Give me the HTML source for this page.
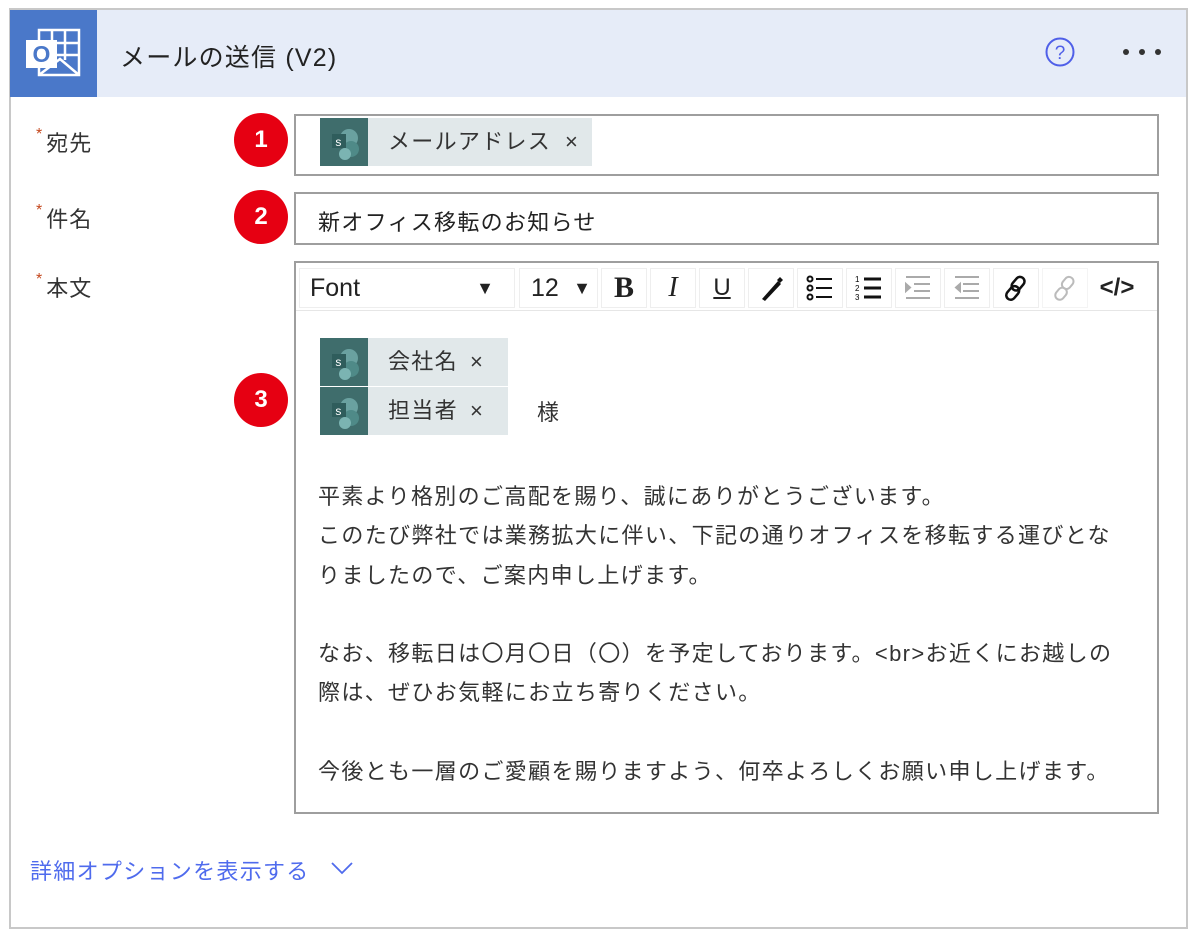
<!DOCTYPE html>
<html><head><meta charset="utf-8"><style>
*{box-sizing:border-box;margin:0;padding:0}
body{width:1200px;height:936px;background:#fff;position:relative;font-family:"Liberation Sans","Noto Sans CJK JP",sans-serif;color:#222;overflow:hidden}
.card{position:absolute;left:9px;top:8px;width:1179px;height:921px;border:2px solid #c8c8c8}
.hdr{position:absolute;left:10px;top:10px;width:1176px;height:87px;background:#e6ecf8}
.logo{position:absolute;left:10px;top:10px;width:87px;height:87px;background:#4a78c9}
.abs{position:absolute}
.j{font-size:22px;letter-spacing:1.3px}
.lbl{position:absolute;left:36px;font-size:22px;letter-spacing:1px;color:#333}
.lbl b{color:#c4471d;font-weight:normal;font-size:16px;vertical-align:top;margin-right:3px}
.box{position:absolute;left:294px;width:865px;border:2px solid #9e9e9e;background:#fff}
.badge{position:absolute;width:54px;height:54px;border-radius:50%;background:#e60012;color:#fff;font-weight:bold;font-size:24px;text-align:center;line-height:54px}
.tok{position:absolute;height:48px;background:#e1e8ea;font-size:22px;letter-spacing:1.3px;line-height:48px;color:#333}
.tok .ic{position:absolute;left:0;top:0;width:48px;height:48px;background:#3f6d6c}
.tb{position:absolute;top:268px;height:40px;border:1px solid #eee;background:#fff;font-size:24px;text-align:center;line-height:38px}
.body{position:absolute;left:318px;font-size:22px;letter-spacing:1.35px;line-height:39.3px;color:#333}
</style></head><body>
<div class="card"></div>
<div class="hdr"></div>
<div class="logo"><svg width="87" height="87" viewBox="0 0 87 87"><g fill="none" stroke="#fff" stroke-width="2.5"><rect x="29" y="20" width="40" height="45"/><line x1="42" y1="20" x2="42" y2="50"/><line x1="55" y1="20" x2="55" y2="50"/><line x1="29" y1="33" x2="69" y2="33"/><line x1="29" y1="45" x2="69" y2="45"/><path d="M29 65 L50 49 L69 65"/></g><rect x="16" y="30" width="31" height="28" fill="#fff"/><text x="31.5" y="52" fill="#4a78c9" font-size="23" font-weight="bold" text-anchor="middle" font-family="Liberation Sans">O</text></svg></div>
<div class="abs" style="left:120px;top:38px;font-size:25px;letter-spacing:1.2px;color:#222">メールの送信 (V2)</div>
<svg class="abs" style="left:1044px;top:36px" width="32" height="32"><circle cx="16" cy="16" r="13.5" fill="none" stroke="#4f5fe8" stroke-width="2"/><text x="16" y="23" text-anchor="middle" font-size="19" fill="#4f5fe8" font-family="Liberation Sans">?</text></svg>
<svg class="abs" style="left:1120px;top:46px" width="48" height="10"><circle cx="6" cy="6" r="3" fill="#333"/><circle cx="22" cy="6" r="3" fill="#333"/><circle cx="38" cy="6" r="3" fill="#333"/></svg>

<div class="lbl" style="top:126px"><b>*</b>宛先</div>
<div class="lbl" style="top:202px"><b>*</b>件名</div>
<div class="lbl" style="top:271px"><b>*</b>本文</div>

<div class="badge" style="left:234px;top:113px">1</div>
<div class="badge" style="left:234px;top:190px">2</div>
<div class="badge" style="left:234px;top:373px">3</div>

<div class="box" style="top:114px;height:62px"></div>
<div class="tok" style="left:320px;top:118px;width:272px"><div class="ic"><svg width="48" height="48"><circle cx="29" cy="20" r="9" fill="#6aa1a0"/><circle cx="31" cy="31" r="8" fill="#4f8a88"/><circle cx="25" cy="36" r="6" fill="#7bb4b2"/><rect x="12" y="16" width="14" height="14" fill="#2f5d5c"/><text x="19" y="28" text-anchor="middle" fill="#fff" font-size="12" font-family="Liberation Sans">s</text></svg></div><span style="position:absolute;left:68px">メールアドレス</span><span style="position:absolute;left:245px;font-size:22px">×</span></div>

<div class="box" style="top:192px;height:53px"></div>
<div class="abs j" style="left:318px;top:205px;color:#222">新オフィス移転のお知らせ</div>

<div class="box" style="top:261px;height:553px"></div>
<div class="abs" style="left:296px;top:263px;width:861px;height:48px;border-bottom:1px solid #e6e6e6"></div>
<div class="tb" style="left:299px;width:216px;text-align:left;padding-left:10px;font-size:25px">Font<span style="position:absolute;right:20px;font-size:18px">▼</span></div>
<div class="tb" style="left:519px;width:79px;text-align:left;padding-left:11px;font-size:25px">12<span style="position:absolute;right:6px;font-size:18px">▼</span></div>
<div class="tb" style="left:601px;width:46px;font-weight:bold;font-family:'Liberation Serif';font-size:30px">B</div>
<div class="tb" style="left:650px;width:46px;font-style:italic;font-family:'Liberation Serif';font-size:28px">I</div>
<div class="tb" style="left:699px;width:46px;text-decoration:underline;font-size:24px">U</div>
<div class="tb" style="left:748px;width:46px"><svg width="30" height="30" style="margin-top:4px"><path d="M6 26 L22 8 L25 11 L9 28 Z" fill="#111"/><path d="M21 7 l3-3 3 3-3 3z" fill="#111"/></svg></div>
<div class="tb" style="left:797px;width:46px"><svg width="32" height="30" style="margin-top:4px" fill="none" stroke="#111" stroke-width="2"><circle cx="6" cy="6" r="2.5"/><circle cx="6" cy="15" r="2.5"/><circle cx="6" cy="24" r="2.5"/><path d="M12 6h16M12 15h16M12 24h16"/></svg></div>
<div class="tb" style="left:846px;width:46px"><svg width="32" height="30" style="margin-top:4px"><text x="2" y="9" font-size="8">1</text><text x="2" y="18" font-size="8">2</text><text x="2" y="27" font-size="8">3</text><path d="M11 6h17M11 15h17M11 24h17" stroke="#111" stroke-width="3"/></svg></div>
<div class="tb" style="left:895px;width:46px"><svg width="32" height="30" style="margin-top:4px" stroke="#aaa" stroke-width="2"><path d="M4 4h24M12 11h16M12 18h16M4 25h24"/><path d="M4 11l4 3.5-4 3.5z" fill="#aaa"/></svg></div>
<div class="tb" style="left:944px;width:46px"><svg width="32" height="30" style="margin-top:4px" stroke="#aaa" stroke-width="2"><path d="M4 4h24M12 11h16M12 18h16M4 25h24"/><path d="M9 11l-4 3.5 4 3.5z" fill="#aaa"/></svg></div>
<div class="tb" style="left:993px;width:46px"><svg width="30" height="30" style="margin-top:4px" fill="none" stroke="#111" stroke-width="2.5"><rect x="13" y="3" width="9" height="15" rx="4.5" transform="rotate(40 17 10)"/><rect x="7" y="12" width="9" height="15" rx="4.5" transform="rotate(40 11 20)"/></svg></div>
<div class="tb" style="left:1042px;width:46px;border-color:#f4f4f4"><svg width="30" height="30" style="margin-top:4px" fill="none" stroke="#bbb" stroke-width="2"><rect x="13" y="3" width="9" height="13" rx="4.5" transform="rotate(40 17 10)"/><rect x="7" y="14" width="9" height="13" rx="4.5" transform="rotate(40 11 20)"/></svg></div>
<div class="tb" style="left:1091px;width:52px;border-color:#fff;font-size:24px;font-weight:bold">&lt;/&gt;</div>

<div class="tok" style="left:320px;top:338px;width:188px"><div class="ic"><svg width="48" height="48"><circle cx="29" cy="20" r="9" fill="#6aa1a0"/><circle cx="31" cy="31" r="8" fill="#4f8a88"/><circle cx="25" cy="36" r="6" fill="#7bb4b2"/><rect x="12" y="16" width="14" height="14" fill="#2f5d5c"/><text x="19" y="28" text-anchor="middle" fill="#fff" font-size="12" font-family="Liberation Sans">s</text></svg></div><span style="position:absolute;left:68px">会社名</span><span style="position:absolute;left:150px">×</span></div>
<div class="tok" style="left:320px;top:387px;width:188px"><div class="ic"><svg width="48" height="48"><circle cx="29" cy="20" r="9" fill="#6aa1a0"/><circle cx="31" cy="31" r="8" fill="#4f8a88"/><circle cx="25" cy="36" r="6" fill="#7bb4b2"/><rect x="12" y="16" width="14" height="14" fill="#2f5d5c"/><text x="19" y="28" text-anchor="middle" fill="#fff" font-size="12" font-family="Liberation Sans">s</text></svg></div><span style="position:absolute;left:68px">担当者</span><span style="position:absolute;left:150px">×</span></div>
<div class="abs j" style="left:537px;top:395px;color:#333">様</div>

<div class="body" style="top:477px">平素より格別のご高配を賜り、誠にありがとうございます。<br>このたび弊社では業務拡大に伴い、下記の通りオフィスを移転する運びとな<br>りましたので、ご案内申し上げます。<br><br>なお、移転日は〇月〇日（〇）を予定しております。&lt;br&gt;お近くにお越しの<br>際は、ぜひお気軽にお立ち寄りください。<br><br>今後とも一層のご愛顧を賜りますよう、何卒よろしくお願い申し上げます。</div>

<div class="abs j" style="left:30px;top:854px;color:#4f6bed">詳細オプションを表示する</div>
<svg class="abs" style="left:330px;top:860px" width="24" height="16"><path d="M2 3 L12 13 L22 3" fill="none" stroke="#4f6bed" stroke-width="1.8"/></svg>
</body></html>
